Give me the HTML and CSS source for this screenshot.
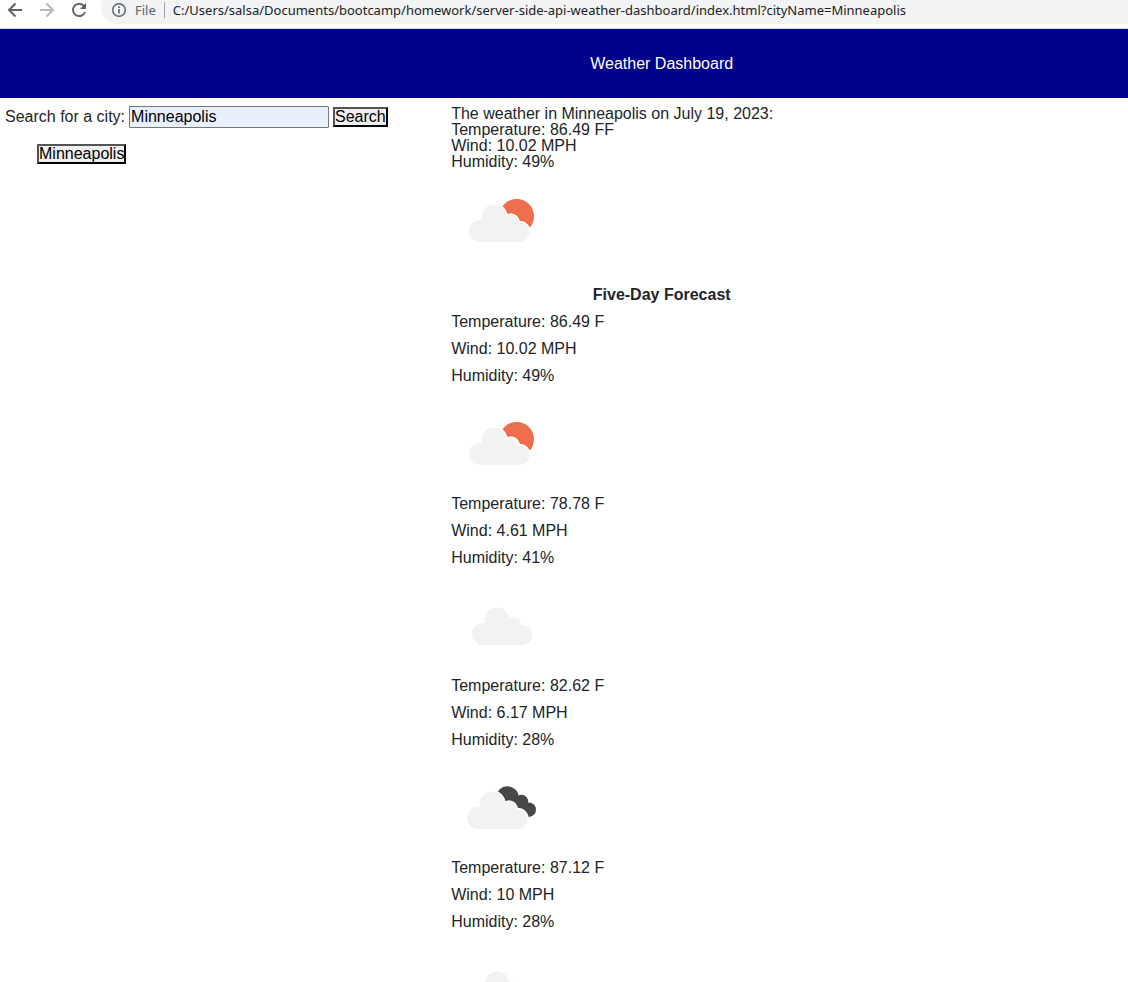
FILE: index.html
```html
<!DOCTYPE html>
<html lang="en">
<head>
<meta charset="utf-8">
<title>Weather Dashboard</title>
<link rel="stylesheet" href="styles.css">
</head>
<body>
<svg class="defs" aria-hidden="true">
  <defs>
    <g id="puff">
      <circle cx="29" cy="61" r="11"/>
      <circle cx="43" cy="47" r="12.5"/>
      <circle cx="60" cy="52" r="7.5"/>
      <circle cx="68.5" cy="62" r="10"/>
      <path d="M29 50H60V60H69V72H29Z"/>
    </g>
    <symbol id="partly" viewBox="0 0 100 100">
      <circle cx="65.7" cy="46.3" r="17.3" fill="#ed6f4d"/>
      <use href="#puff" fill="#ea5a36" stroke="#ea5a36" stroke-width="4" clip-path="url(#sunclip)"/>
      <use href="#puff" fill="#fff" stroke="#fff" stroke-width="2.4"/>
      <use href="#puff" fill="#f2f2f0"/>
    </symbol>
    <symbol id="cloudy" viewBox="0 0 100 100">
      <use href="#puff" x="3" y="-2" fill="#f2f2f0"/>
    </symbol>
    <symbol id="broken" viewBox="0 0 100 100">
      <g fill="#48484a">
        <circle cx="56.5" cy="40.5" r="11.2"/>
        <circle cx="70.5" cy="44.5" r="6.7"/>
        <circle cx="77.8" cy="52.7" r="7.2"/>
        <path d="M58 40H70L76 50V60H58Z"/>
      </g>
      <use href="#puff" x="-2" fill="#fff" stroke="#fff" stroke-width="2.4"/>
      <use href="#puff" x="-2" fill="#f2f2f0"/>
    </symbol>
    <clipPath id="sunclip"><circle cx="65.7" cy="46.3" r="17.3"/></clipPath>
  </defs>
</svg>

<div class="browser-bar">
  <svg class="nav-icons" viewBox="0 0 96 24" fill="none" stroke-width="2" aria-hidden="true">
    <path d="M22 10H9M15.500 3.500L9 10L15.500 16.500" stroke="#5f6368"/>
    <path d="M40 10H53M46.500 3.500L53 10L46.500 16.500" stroke="#bababc"/>
    <path d="M84 6A6.200 6.200 0 1 0 85 12" stroke="#5f6368"/>
    <path d="M86 3V9H80Z" fill="#5f6368"/>
  </svg>
  <div class="address">
    <svg class="info" viewBox="0 0 16 16" fill="none" stroke="#5f6368" aria-hidden="true">
      <circle cx="8" cy="8" r="6.300" stroke-width="1.500"/>
      <path d="M8 7V11.500M8 4.200V5.900" stroke-width="1.600"/>
    </svg>
    <span class="scheme">File</span>
    <span class="url">C:/Users/salsa/Documents/bootcamp/homework/server-side-api-weather-dashboard/index.html?cityName=Minneapolis</span>
  </div>
</div>

<header class="banner columns"><h1 class="title">Weather Dashboard</h1></header>

<main class="columns">
  <section class="search">
    <form class="search-form">
      <label for="city">Search for a city:</label>
      <input class="city" id="city" name="cityName" type="text" value="Minneapolis">
      <button class="button" type="button">Search</button>
    </form>
    <div class="history"><button class="button" type="button">Minneapolis</button></div>
  </section>
  <section class="weather">
    <div class="today">
      <p>The weather in Minneapolis on July 19, 2023:</p>
      <p>Temperature: 86.49 FF</p>
      <p>Wind: 10.02 MPH</p>
      <p>Humidity: 49%</p>
      <svg class="icon" role="img" aria-label="Partly cloudy"><use href="#partly"/></svg>
    </div>
    <h2 class="forecast-title">Five-Day Forecast</h2>
    <article class="day">
      <p>Temperature: 86.49 F</p>
      <p>Wind: 10.02 MPH</p>
      <p>Humidity: 49%</p>
      <svg class="icon" role="img" aria-label="Partly cloudy"><use href="#partly"/></svg>
    </article>
    <article class="day">
      <p>Temperature: 78.78 F</p>
      <p>Wind: 4.61 MPH</p>
      <p>Humidity: 41%</p>
      <svg class="icon" role="img" aria-label="Cloudy"><use href="#cloudy"/></svg>
    </article>
    <article class="day">
      <p>Temperature: 82.62 F</p>
      <p>Wind: 6.17 MPH</p>
      <p>Humidity: 28%</p>
      <svg class="icon" role="img" aria-label="Broken clouds"><use href="#broken"/></svg>
    </article>
    <article class="day">
      <p>Temperature: 87.12 F</p>
      <p>Wind: 10 MPH</p>
      <p>Humidity: 28%</p>
      <svg class="icon" role="img" aria-label="Cloudy"><use href="#cloudy"/></svg>
    </article>
  </section>
</main>
</body>
</html>
```
FILE: styles.css
```css
* { box-sizing: border-box; }
body {
  margin: 0;
  height: 100vh;
  overflow: hidden;
  background: #fff;
  color: #212529;
  font: 16px/16px "Liberation Sans", Arial, sans-serif;
}
h1, h2, p { margin: 0; font-size: 16px; }
.defs { position: absolute; width: 0; height: 0; }

.browser-bar {
  display: flex;
  align-items: flex-start;
  height: 29px;
  border-bottom: 1px solid #dadce0;
}
.nav-icons { flex: none; width: 96px; height: 24px; }
.address {
  display: flex;
  flex: 1;
  align-items: center;
  height: 24px;
  margin-left: 5px;
  padding: 0 0 4px 10px;
  background: #f1f3f4;
  border-radius: 0 0 0 16px;
  font: 13px/20px "Noto Sans", "Open Sans", sans-serif;
  white-space: nowrap;
}
.info { width: 16px; height: 16px; }
.scheme {
  margin: 0 8px;
  padding-right: 8px;
  border-right: 1px solid #9aa0a6;
  color: #5f6368;
  line-height: 16px;
}
.url { color: #202124; }

.columns { display: grid; grid-template-columns: 40% minmax(0, 421px); }
.banner { padding: 27px 0 26px; background: #00008b; color: #fff; }
.title { grid-column: 2; font-weight: 400; text-align: center; }

.search { padding: 8px 5px; }
.search-form { display: flex; align-items: center; gap: 4px; white-space: nowrap; }
.city {
  width: 200px;
  height: 22px;
  padding: 1px;
  border: 1px solid #767676;
  border-radius: 1px;
  background: #e8f0fe;
  color: #000;
  font: inherit;
}
.button {
  padding: 0;
  border: 2px outset #000;
  border-radius: 0;
  background: #efefef;
  color: #000;
  font: inherit;
}
.history { padding: 16px 32px; }

.weather { padding-top: 8px; }
.icon { display: block; width: 100px; height: 100px; }
.forecast-title { margin-top: 11px; line-height: 27px; text-align: center; }
.day p { line-height: 27px; }
.day .icon { margin: 4px 0 -3px; }
```
